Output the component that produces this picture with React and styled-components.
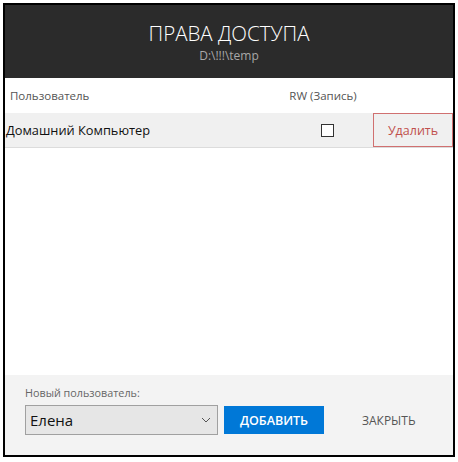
import React from "react";
import styled, { createGlobalStyle } from "styled-components";

const Global = createGlobalStyle`
  html, body { margin: 0; padding: 0; background: #fff; }
  body { font-family: "Open Sans", "Noto Sans", sans-serif; }
`;

const Window = styled.div`
  margin: 3px;
  width: 452px;
  height: 454px;
  box-sizing: border-box;
  border: 2px solid #000;
  display: flex;
  flex-direction: column;
  background: #fff;
`;

const Header = styled.div`
  height: 73px;
  background: #2b2b2b;
  display: flex;
  flex-direction: column;
  align-items: center;
  justify-content: center;
  padding-top: 1px;
  box-sizing: border-box;
`;

const Title = styled.div`
  color: #fff;
  font-size: 20.5px;
  font-weight: 300;
  line-height: 26px;
`;

const Subtitle = styled.div`
  color: #a8a8a8;
  font-size: 12px;
  line-height: 16px;
  margin-top: 2px;
`;

const Content = styled.div`
  flex: 1;
  display: flex;
  flex-direction: column;
`;

const Grid = styled.div`
  display: grid;
  grid-template-columns: 1fr 100px 80px;
  align-items: center;
  height: ${(p) => p.$h}px;
  background: ${(p) => p.$bg || "transparent"};
  border-bottom: ${(p) => (p.$line ? "1px solid #dcdcdc" : "none")};
  box-sizing: border-box;
`;

const HeadCell = styled.div`
  font-size: 11.5px;
  color: #555;
  padding-left: ${(p) => p.$pl || 0}px;
  text-align: ${(p) => p.$align || "left"};
`;

const Cell = styled.div`
  font-size: 12.8px;
  color: #111;
  padding-left: ${(p) => p.$pl || 0}px;
  display: flex;
  justify-content: ${(p) => p.$justify || "flex-start"};
  align-items: center;
`;

const Check = styled.span`
  display: block;
  width: 11px;
  height: 11px;
  border: 1px solid #333;
  background: #fff;
  margin-left: 8px;
`;

const DeleteBtn = styled.button`
  height: 34px;
  width: 80px;
  box-sizing: border-box;
  border: 1px solid #d07070;
  background: transparent;
  color: #c0504d;
  font-family: inherit;
  font-size: 12.5px;
  padding: 0;
  cursor: pointer;
`;

const Footer = styled.div`
  height: 80px;
  background: #f3f3f3;
  box-sizing: border-box;
  padding: 11px 0 0 20px;
  display: flex;
  flex-direction: column;
`;

const Label = styled.div`
  font-size: 10.8px;
  color: #666;
  line-height: 14px;
  margin-bottom: 5px;
`;

const Controls = styled.div`
  display: flex;
  align-items: center;
`;

const Select = styled.div`
  width: 193px;
  height: 30px;
  box-sizing: border-box;
  border: 1px solid #a0a0a0;
  background: #e6e6e6;
  display: flex;
  align-items: center;
  justify-content: space-between;
  padding: 0 6px 0 4px;
  font-size: 15px;
  color: #111;
`;

const AddBtn = styled.button`
  margin-left: 6px;
  width: 100px;
  height: 28px;
  border: none;
  background: #0078d7;
  color: #fff;
  font-family: inherit;
  font-size: 12.5px;
  font-weight: 600;
  padding: 0;
`;

const CloseBtn = styled.button`
  margin-left: 38px;
  height: 28px;
  border: none;
  background: transparent;
  color: #555;
  font-family: inherit;
  font-size: 12px;
  padding: 0;
`;

export default function App() {
  return (
    <>
      <Global />
      <Window>
        <Header>
          <Title>ПРАВА ДОСТУПА</Title>
          <Subtitle>D:\!!!\temp</Subtitle>
        </Header>
        <Content>
          <Grid $h={35}>
            <HeadCell $pl={5}>Пользователь</HeadCell>
            <HeadCell $align="center">RW (Запись)</HeadCell>
            <div />
          </Grid>
          <Grid $h={35} $bg="#f0f0f0" $line>
            <Cell $pl={1}>Домашний Компьютер</Cell>
            <Cell $justify="center">
              <Check />
            </Cell>
            <DeleteBtn>Удалить</DeleteBtn>
          </Grid>
        </Content>
        <Footer>
          <Label>Новый пользователь:</Label>
          <Controls>
            <Select>
              <span>Елена</span>
              <svg width="10" height="6" viewBox="0 0 10 6">
                <path d="M1 1l4 4 4-4" fill="none" stroke="#555" strokeWidth="1" />
              </svg>
            </Select>
            <AddBtn>ДОБАВИТЬ</AddBtn>
            <CloseBtn>ЗАКРЫТЬ</CloseBtn>
          </Controls>
        </Footer>
      </Window>
    </>
  );
}
